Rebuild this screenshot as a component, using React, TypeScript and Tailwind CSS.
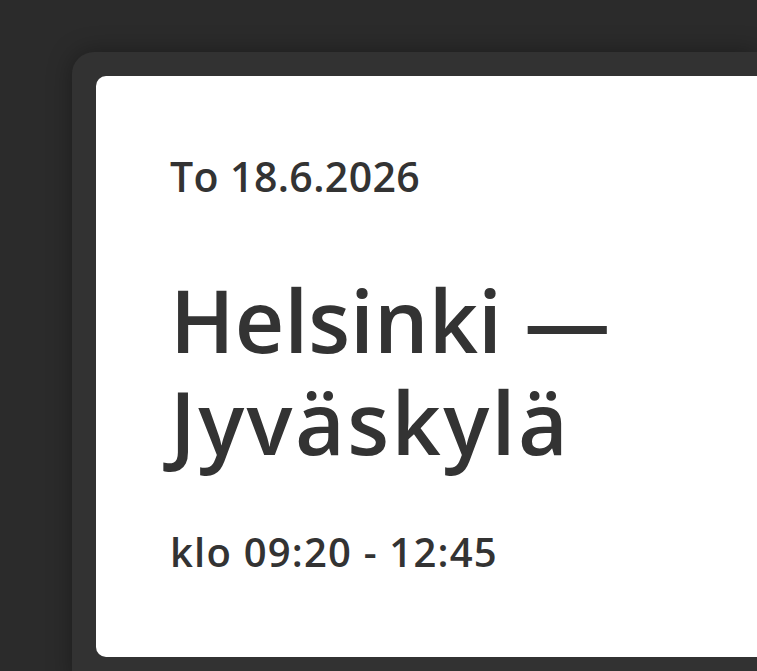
export default function App() {
  return (
    <div className="min-h-[671px] overflow-hidden bg-[#2b2b2b] pl-[72px] pt-[52px] font-['Open_Sans',sans-serif]">
      {/* Outer panel */}
      <div className="rounded-tl-[22px] bg-[#323232] pb-6 pl-6 pt-6 shadow-[0_0_24px_rgba(0,0,0,0.35)]">
        {/* Ticket card */}
        <div className="h-[581px] rounded-l-[10px] bg-white pl-[74px] pt-[72px] text-[#333333]">
          <p className="text-[41px] font-semibold leading-[56px] tracking-[0.4px]">To 18.6.2026</p>
          <h1 className="mt-[65px] text-[86px] font-semibold leading-[102px]">
            Helsinki —<br />
            <span className="tracking-[2.4px]">Jyväskylä</span>
          </h1>
          <p className="mt-[54px] text-[40px] font-semibold leading-[50px] tracking-[1.2px]">
            klo 09:20 - 12:45
          </p>
        </div>
      </div>
    </div>
  );
}
